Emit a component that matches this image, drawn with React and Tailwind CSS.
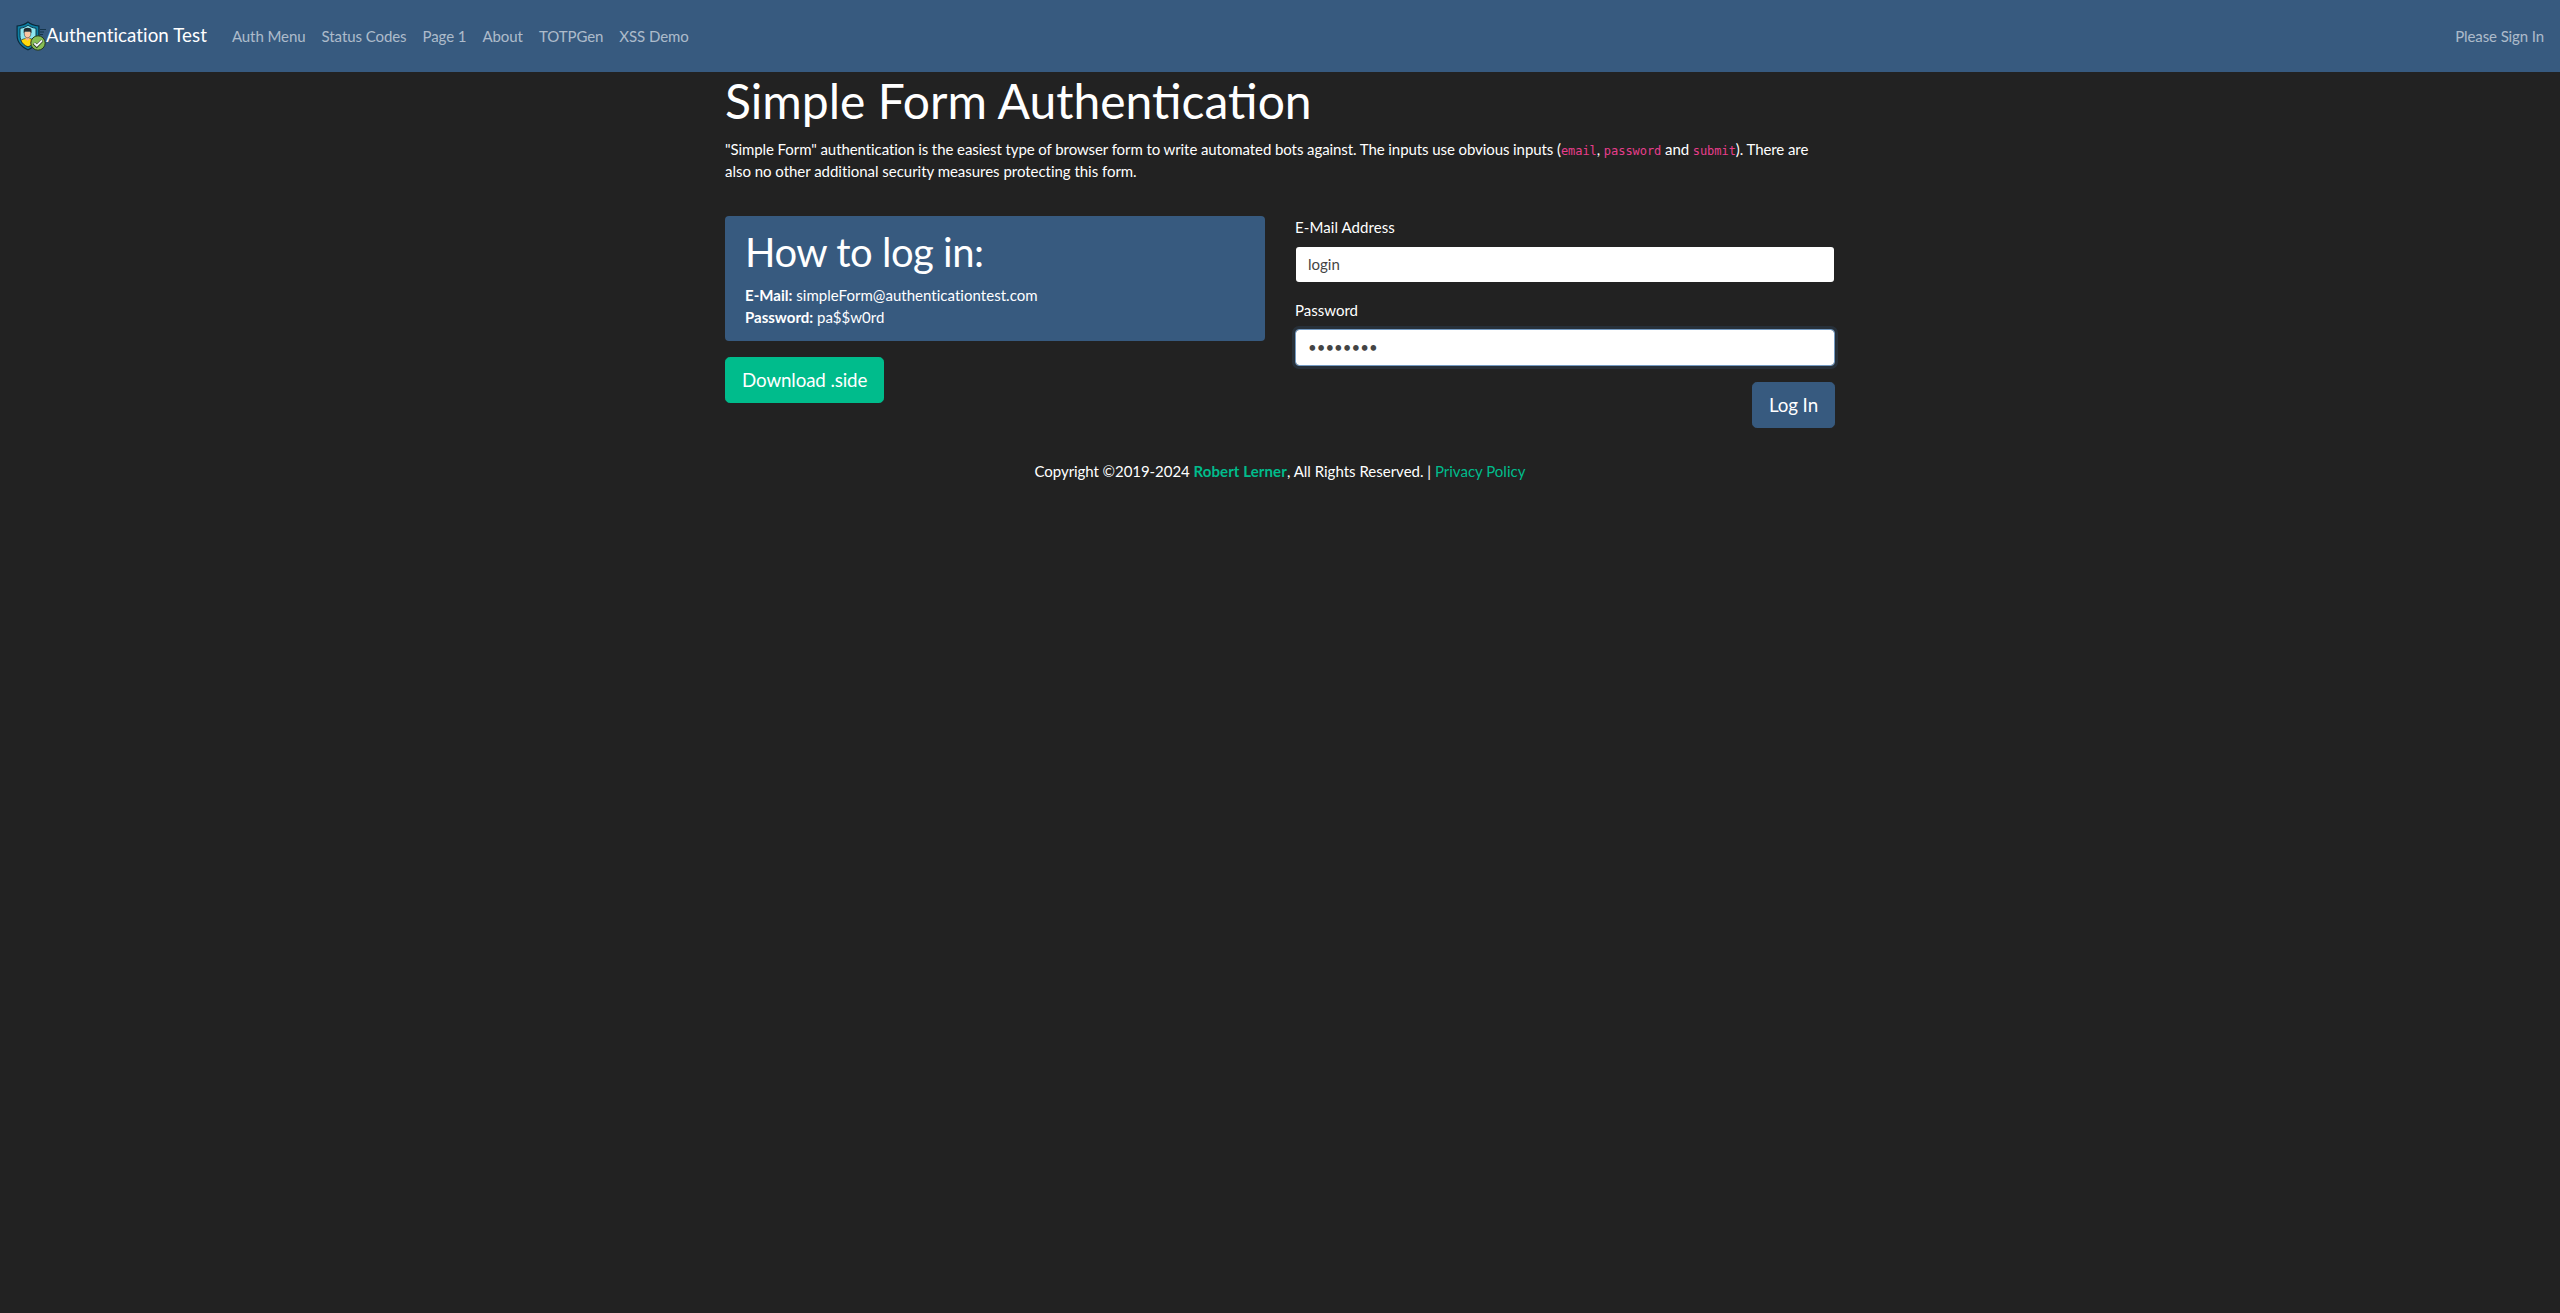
function ShieldLogo() {
  return (
    <svg className="h-[30px] w-[30px] shrink-0" viewBox="0 0 30 30" fill="none">
      <path d="M12 0.3C9.5 2.6 5.500 4.200 0.500 4.600V14.500C0.500 21.500 5.500 26.500 12 29.500C18.500 26.500 23.500 21.500 23.500 14.500V4.600C18.500 4.200 14.500 2.600 12 .3Z" fill="#0b2a3c" />
      <path d="M12 1.800C9.500 3.800 6 5.200 1.700 5.600V14.500C1.700 21 6 25.300 12 28.200C18 25.300 22.300 21 22.300 14.500V5.600C18 5.200 14.500 3.800 12 1.800Z" fill="#0d7fa3" />
      <path d="M12 4.300C10 5.800 7.500 6.800 4 7.300V14.500C4 19.500 7 23.500 12 25.800C17 23.500 20 19.500 20 14.500V7.300C16.500 6.800 14 5.800 12 4.300Z" fill="#8de6f0" stroke="#0b2a3c" strokeWidth=".9" />
      <path d="M24 8.500H30M24 11H28M24 13.500H27" stroke="#14344a" strokeWidth="1.1" />
      <path d="M5 19.500C6.200 18 8.500 17.800 9.500 17.500H13.500C16 18 17.800 18.500 18.500 20C17.500 22.500 15 24.700 12 25.800C8.500 24.500 6.300 22.500 5 19.500Z" fill="#ffd90a" stroke="#1d2427" strokeWidth=".7" />
      <path d="M9.500 15.500V18L11.500 20L13.500 18V15.500Z" fill="#f4b48e" />
      <path d="M8.300 10.500V13C8.300 18 14.800 18 14.800 13V10.500Z" fill="#fbc5a2" stroke="#222" strokeWidth=".5" />
      <path d="M7.700 12V8.800C7.700 6 15.500 6 15.500 8.800V12C14.500 11.500 14.500 10.500 13.500 10.200H9.500C8.500 10.500 8.500 11.500 7.700 12Z" fill="#272b2f" />
      <circle cx="22" cy="22" r="7.200" fill="#86bd55" stroke="#27391f" strokeWidth="1" />
      <path d="M18 22.300L20.800 25L26.200 19.500" stroke="#26331f" strokeWidth="3.200" />
      <path d="M18.300 22.200L20.800 24.600L26 19.500" stroke="#f2f5f7" strokeWidth="1.900" />
    </svg>
  );
}

const links = ["Auth Menu", "Status Codes", "Page 1", "About", "TOTPGen", "XSS Demo"];

function Code({ children }) {
  return (
    <code className="font-['DejaVu_Sans_Mono',monospace] text-[12px] leading-none tracking-[-0.05px] text-[#e83e8c]">
      {children}
    </code>
  );
}

export default function App() {
  return (
    <div className="min-h-screen bg-[#222] font-['Lato',sans-serif] text-[15px] leading-[22.5px] text-white">
      <nav className="flex h-[72px] items-center bg-[#375a7f] px-4">
        <a href="#" className="mr-[17px] flex items-center text-[18.75px] leading-7 tracking-[0.06px]">
          <ShieldLogo />
          <span className="pb-0.5">Authentication Test</span>
        </a>
        <ul className="flex grow tracking-[-0.07px]">
          {links.map((link) => (
            <li key={link} className="px-2 text-white/60">
              <a href="#">{link}</a>
            </li>
          ))}
        </ul>
        <a href="#" className="tracking-[-0.11px] text-white/60">Please Sign In</a>
      </nav>

      <main className="mx-auto w-[1110px]">
        <h1 className="mb-2 text-[48px] leading-[57.6px]">Simple Form Authentication</h1>
        <p className="tracking-[-0.083px]">
          "Simple Form" authentication is the easiest type of browser form to write automated bots against. The
          inputs use obvious inputs (<Code>email</Code>, <Code>password</Code> and <Code>submit</Code>). There are{" "}
          <span className="tracking-[-0.03px]">
            also no other additional security measures protecting this form.
          </span>
        </p>

        <div className="mt-[33px] grid grid-cols-2 gap-[30px]">
          <div>
            <section className="mb-4 rounded-[4px] bg-[#375a7f] px-5 py-3">
              <h2 className="mb-2 text-[40px] leading-[48px] tracking-[-0.48px]">How to log in:</h2>
              <p className="tracking-[0.03px]">
                <b className="font-bold">E-Mail:</b> simpleForm@authenticationtest.com
              </p>
              <p>
                <b className="font-bold">Password:</b> pa$$w0rd
              </p>
            </section>
            <button className="rounded-[4.8px] border border-[#00bc8c] bg-[#00bc8c] px-4 py-2 text-[18.75px] leading-[28.125px] tracking-[-0.12px]">
              Download .side
            </button>
          </div>

          <form className="flex flex-col">
            <label htmlFor="email" className="mb-2 tracking-[0.08px]">E-Mail Address</label>
            <input
              id="email"
              type="email"
              defaultValue="login"
              className="mb-4 h-[36.5px] rounded-[4px] border border-transparent bg-white bg-clip-padding px-3 py-1.5 text-[#444] outline-none"
            />
            <label htmlFor="password" className="mb-2">Password</label>
            <input
              id="password"
              type="password"
              defaultValue="pa$$w0rd"
              className="mb-4 h-[36.5px] rounded-[4px] border border-[#739ac2] bg-white bg-clip-padding px-3 py-1.5 text-[#444] shadow-[0_0_0_3px_rgba(55,90,127,0.25)] outline-none"
            />
            <button
              type="button"
              className="self-end rounded-[4.8px] border border-[#375a7f] bg-[#375a7f] px-4 py-2 text-[18.75px] leading-[28.125px] tracking-[-0.1px]"
            >
              Log In
            </button>
          </form>
        </div>

        <footer className="mt-8 text-center">
          <span className="tracking-[-0.06px]">Copyright ©2019-2024 </span>
          <a href="#" className="font-bold tracking-[0.1px] text-[#00bc8c]">Robert Lerner</a>, All Rights
          Reserved. | <a href="#" className="text-[#00bc8c]">Privacy Policy</a>
        </footer>
      </main>
    </div>
  );
}
